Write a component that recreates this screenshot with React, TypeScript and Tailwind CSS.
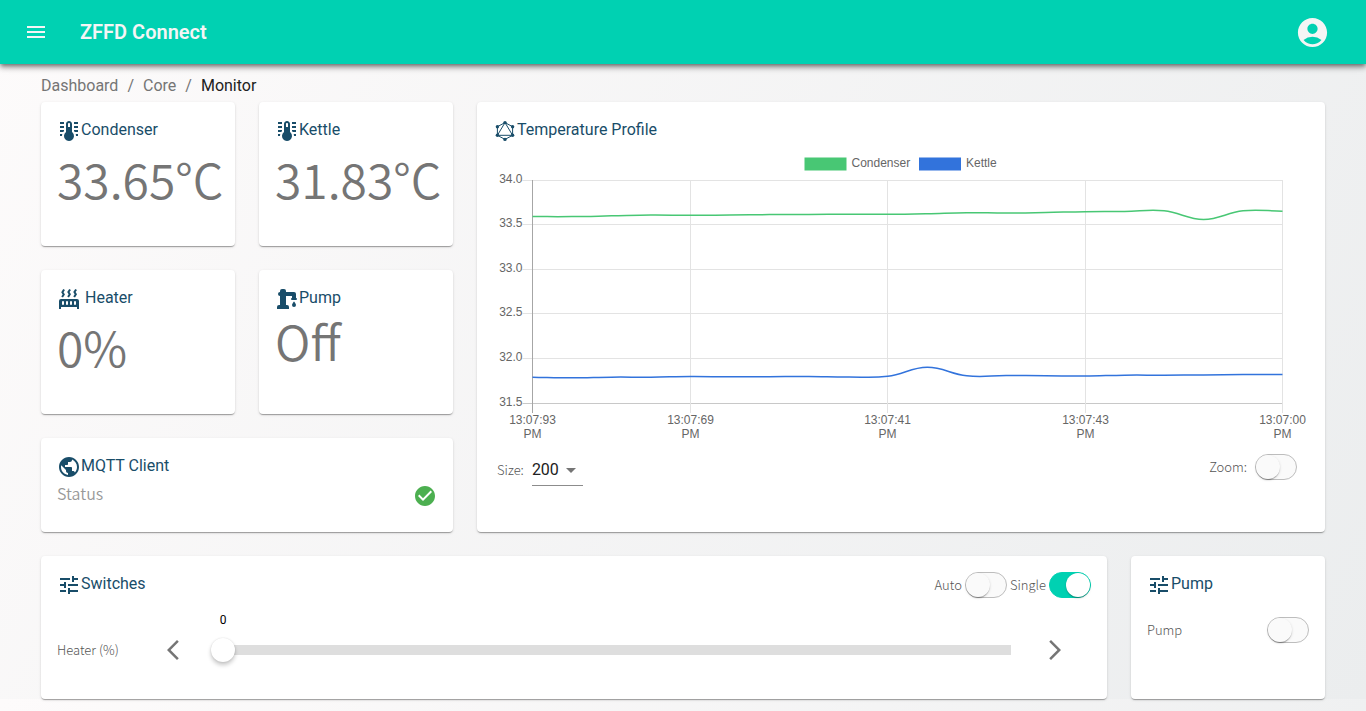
import React, { useState } from "react";
import {
  MdAccountCircle,
  MdArrowBackIosNew,
  MdArrowForwardIos,
  MdCheckCircle,
  MdMenu,
  MdPublic,
  MdTune,
} from "react-icons/md";

const THERMOMETER =
  "M17 3H21V5H17V3M17 7H21V9H17V7M17 11H21V13H17.75L17 12.1V11M21 15V17H19C19 16.31 18.9 15.63 18.71 15H21M7 3V5H3V3H7M7 7V9H3V7H7M7 11V12.1L6.25 13H3V11H7M3 15H5.29C5.1 15.63 5 16.31 5 17H3V15M15 13V5C15 3.34 13.66 2 12 2S9 3.34 9 5V13C6.79 14.66 6.34 17.79 8 20S12.79 22.66 15 21 17.66 16.21 16 14C15.72 13.62 15.38 13.28 15 13M12 4C12.55 4 13 4.45 13 5V8H11V5C11 4.45 11.45 4 12 4Z";
const RADIATOR =
  "M7.95,3L6.53,5.19L7.95,7.4H7.94L5.95,10.5L4.22,9.6L5.64,7.39L4.22,5.19L6.22,2.09L7.95,3M13.95,2.89L12.53,5.1L13.95,7.3L13.94,7.31L11.95,10.4L10.22,9.5L11.64,7.3L10.22,5.1L12.22,2L13.95,2.89M20,2.89L18.56,5.1L20,7.3V7.31L18,10.4L16.25,9.5L17.67,7.3L16.25,5.1L18.25,2L20,2.89M2,22V14A2,2 0 0,1 4,12H20A2,2 0 0,1 22,14V22H20V20H4V22H2M6,14A1,1 0 0,0 5,15V17A1,1 0 0,0 6,18A1,1 0 0,0 7,17V15A1,1 0 0,0 6,14M10,14A1,1 0 0,0 9,15V17A1,1 0 0,0 10,18A1,1 0 0,0 11,17V15A1,1 0 0,0 10,14M14,14A1,1 0 0,0 13,15V17A1,1 0 0,0 14,18A1,1 0 0,0 15,17V15A1,1 0 0,0 14,14M18,14A1,1 0 0,0 17,15V17A1,1 0 0,0 18,18A1,1 0 0,0 19,17V15A1,1 0 0,0 18,14Z";
const WATER_PUMP =
  "M19,14.5C19,14.5 21,16.67 21,18A2,2 0 0,1 19,20A2,2 0 0,1 17,18C17,16.67 19,14.5 19,14.5M5,18V9A2,2 0 0,1 3,7A2,2 0 0,1 5,5V4A2,2 0 0,1 7,2H9A2,2 0 0,1 11,4V5H19A2,2 0 0,1 21,7V9L21,11A1,1 0 0,1 22,12A1,1 0 0,1 21,13H17A1,1 0 0,1 16,12A1,1 0 0,1 17,11V9H11V18H12A2,2 0 0,1 14,20V22H2V20A2,2 0 0,1 4,18H5Z";

function PathIcon({ d }: { d: string }) {
  return (
    <svg viewBox="0 0 24 24" className="size-6 shrink-0 fill-current" aria-hidden="true">
      <path d={d} />
    </svg>
  );
}

function GraphIcon() {
  const nodes = [
    [12, 3.6],
    [19.6, 7.7],
    [19.6, 16.3],
    [12, 20.4],
    [4.4, 16.3],
    [4.4, 7.7],
  ];
  return (
    <svg viewBox="0 0 24 24" className="size-6 shrink-0" aria-hidden="true">
      <g fill="none" stroke="currentColor" strokeWidth="1">
        <path d="M12 3.6 19.6 7.7V16.3L12 20.4 4.4 16.3V7.7Z" />
        <path d="M12 3.6 19.6 16.3H4.4Z" />
      </g>
      {nodes.map(([x, y]) => (
        <circle key={`${x}-${y}`} cx={x} cy={y} r="1.7" fill="currentColor" />
      ))}
    </svg>
  );
}

function Card({ className = "", children }: { className?: string; children: React.ReactNode }) {
  return (
    <section
      className={`rounded bg-white px-4 pt-4 shadow-[0px_2px_1px_-1px_rgba(0,0,0,0.2),0px_1px_1px_0px_rgba(0,0,0,0.14),0px_1px_3px_0px_rgba(0,0,0,0.12)] ${className}`}
    >
      {children}
    </section>
  );
}

function CardTitle({ icon, children, gap = "" }: { icon: React.ReactNode; children: React.ReactNode; gap?: string }) {
  return (
    <h2 className={`flex h-6 items-start text-base leading-6 text-[#194d69] ${gap}`}>
      <span className="pt-px">{icon}</span>
      <span>{children}</span>
    </h2>
  );
}

function Reading({ children, className = "mt-2" }: { children: React.ReactNode; className?: string }) {
  return (
    <p
      className={`font-['Noto_Sans_CJK_SC',sans-serif] text-5xl leading-14 font-[350] whitespace-nowrap text-[#757575] ${className}`}
    >
      {children}
    </p>
  );
}

const LABEL = "font-['Noto_Sans_CJK_SC',sans-serif] text-[13px] leading-5 font-light text-[#555]";

function Toggle({ id, initial = false }: { id: string; initial?: boolean }) {
  const [on, setOn] = useState(initial);
  return (
    <span className="relative inline-flex h-[26px] w-[42px] shrink-0">
      <input
        id={id}
        type="checkbox"
        role="switch"
        checked={on}
        onChange={() => setOn(!on)}
        className="peer h-full w-full cursor-pointer appearance-none rounded-full border border-[#bdbdbd] bg-[#fafafa] checked:border-[#00d1b2] checked:bg-[#00d1b2]"
      />
      <span className="pointer-events-none absolute top-px left-px size-6 rounded-full bg-[#fafafa] shadow-[0px_2px_1px_-1px_rgba(0,0,0,0.2),0px_1px_1px_0px_rgba(0,0,0,0.14),0px_1px_3px_0px_rgba(0,0,0,0.12)] peer-checked:left-[17px] peer-checked:bg-white" />
    </span>
  );
}

const PLOT = { left: 39.5, right: 789.5, top: 30, bottom: 253 };
const MIN = 31.5;
const MAX = 34;

const CONDENSER = [
  33.59, 33.59, 33.598, 33.607, 33.604, 33.608, 33.612, 33.613, 33.616, 33.615, 33.622, 33.634, 33.63, 33.636, 33.645,
  33.647, 33.655, 33.558, 33.655, 33.65,
];
const KETTLE = [
  31.79, 31.782, 31.79, 31.79, 31.797, 31.794, 31.795, 31.797, 31.792, 31.8, 31.9, 31.805, 31.807, 31.806, 31.802, 31.812,
  31.812, 31.815, 31.82, 31.82,
];
const Y_TICKS = ["34.0", "33.5", "33.0", "32.5", "32.0", "31.5"];
const X_TICKS = [
  { index: 0, label: "13:07:93" },
  { index: 4, label: "13:07:69" },
  { index: 9, label: "13:07:41" },
  { index: 14, label: "13:07:43" },
  { index: 19, label: "13:07:00" },
];

const xAt = (i: number) => PLOT.left + ((PLOT.right - PLOT.left) * i) / 19;
const yAt = (v: number) => PLOT.top + ((MAX - v) / (MAX - MIN)) * (PLOT.bottom - PLOT.top);

function smoothPath(values: number[]) {
  const pts = values.map((v, i) => ({ x: xAt(i), y: yAt(v) }));
  const handles = pts.map((p, i) => {
    const prev = pts[i - 1] ?? p;
    const next = pts[i + 1] ?? p;
    const d1 = Math.hypot(p.x - prev.x, p.y - prev.y);
    const d2 = Math.hypot(next.x - p.x, next.y - p.y);
    const a = (0.4 * d1) / (d1 + d2);
    const b = (0.4 * d2) / (d1 + d2);
    return {
      inX: p.x - a * (next.x - prev.x),
      inY: p.y - a * (next.y - prev.y),
      outX: p.x + b * (next.x - prev.x),
      outY: p.y + b * (next.y - prev.y),
    };
  });
  return pts
    .map((p, i) => {
      if (i === 0) return `M${p.x} ${p.y}`;
      const from = handles[i - 1];
      const to = handles[i];
      return `C${from.outX} ${from.outY} ${to.inX} ${to.inY} ${p.x} ${p.y}`;
    })
    .join("");
}

function TemperatureChart() {
  return (
    <svg
      viewBox="0 0 816 292"
      className="mt-2 block h-auto w-full font-['Liberation_Sans',sans-serif] text-xs"
      role="img"
      aria-label="Condenser and kettle temperature over time"
    >
      <rect x="311.5" y="7.5" width="42" height="13" fill="#48c774" />
      <text x="358.5" y="17" fill="#666">
        Condenser
      </text>
      <rect x="426" y="7.5" width="42" height="13" fill="#3273dc" />
      <text x="473" y="17" fill="#666">
        Kettle
      </text>
      {Y_TICKS.map((t) => {
        const y = Math.floor(yAt(Number(t))) + 0.5;
        return (
          <g key={t}>
            <path d={`M29.5 ${y}H789.5`} stroke={t === "31.5" ? "#c8c8c8" : "#e3e3e3"} />
            <text x="29.5" y={y + 2.5} textAnchor="end" fill="#666">
              {t}
            </text>
          </g>
        );
      })}
      {X_TICKS.map(({ index, label }) => {
        const x = Math.floor(xAt(index)) + 0.5;
        return (
          <g key={label} textAnchor="middle" fill="#666">
            <path d={`M${x} 30V263`} stroke={index === 0 ? "#a6a6a6" : "#e3e3e3"} />
            <text x={x} y="274">
              {label}
            </text>
            <text x={x} y="288">
              PM
            </text>
          </g>
        );
      })}
      <path d={smoothPath(CONDENSER)} fill="none" stroke="#48c774" strokeWidth="1.5" />
      <path d={smoothPath(KETTLE)} fill="none" stroke="#3273dc" strokeWidth="1.5" />
    </svg>
  );
}

function SwitchesCard() {
  const [heat, setHeat] = useState(0);
  const step = (delta: number) => setHeat((v) => Math.min(100, Math.max(0, v + delta)));
  return (
    <Card className="col-span-5">
      <div className="flex items-start justify-between">
        <CardTitle icon={<MdTune className="size-6" />}>Switches</CardTitle>
        <div className="flex items-center gap-[3px]">
          <label htmlFor="auto" className={LABEL}>
            Auto
          </label>
          <Toggle id="auto" />
          <label htmlFor="single" className={LABEL}>
            Single
          </label>
          <Toggle id="single" initial />
        </div>
      </div>
      <div className="mt-2 flex items-center text-[#757575]">
        <label htmlFor="heater" className={`w-[104px] ${LABEL}`}>
          Heater (%)
        </label>
        <button type="button" aria-label="Decrease heater" onClick={() => step(-1)}>
          <MdArrowBackIosNew className="size-6" />
        </button>
        <div className="relative mr-8 ml-[26px] flex flex-1 py-8">
          <output htmlFor="heater" className="absolute top-1.5 left-0 w-6 text-center text-xs leading-4 text-black">
            {heat}
          </output>
          <input
            id="heater"
            type="range"
            min="0"
            max="100"
            value={heat}
            onChange={(e) => setHeat(Number(e.target.value))}
            className="h-6 w-full cursor-pointer appearance-none bg-transparent bg-[linear-gradient(#dedede,#dedede)] bg-[length:calc(100%-12px)_10px] bg-right bg-no-repeat [&::-webkit-slider-thumb]:size-6 [&::-webkit-slider-thumb]:appearance-none [&::-webkit-slider-thumb]:rounded-full [&::-webkit-slider-thumb]:bg-white [&::-webkit-slider-thumb]:shadow-[0_3px_4px_rgba(0,0,0,0.22),0_0_2px_rgba(0,0,0,0.12)]"
          />
        </div>
        <button type="button" aria-label="Increase heater" className="mr-6" onClick={() => step(1)}>
          <MdArrowForwardIos className="size-6" />
        </button>
      </div>
    </Card>
  );
}

export default function App() {
  return (
    <div className="min-h-screen bg-[linear-gradient(120deg,#fdfbfb_0%,#ebedee_100%)] bg-origin-content pb-3 font-[Roboto,sans-serif]">
      <header className="relative flex h-16 items-center bg-[#00d1b2] px-6 text-[#f5f5f5] shadow-[0px_2px_4px_-1px_rgba(0,0,0,0.4),0px_4px_5px_0px_rgba(0,0,0,0.24),0px_1px_10px_0px_rgba(0,0,0,0.16)]">
        <button type="button" aria-label="Open menu">
          <MdMenu className="size-6" />
        </button>
        <h1 className="ml-8 flex-1 text-xl leading-8 font-semibold">ZFFD Connect</h1>
        <button type="button" aria-label="Account" className="mr-3">
          <MdAccountCircle className="size-[35px]" />
        </button>
      </header>

      <main className="px-[41px]">
        <nav aria-label="Breadcrumb" className="flex gap-[9px] pt-[10px] pb-1 text-base leading-6 text-[#757575]">
          <a href="#dashboard">Dashboard</a>
          <span>/</span>
          <a href="#core">Core</a>
          <span>/</span>
          <a href="#monitor" aria-current="page" className="text-[#212121]">
            Monitor
          </a>
        </nav>

        <div className="grid grid-cols-6 grid-rows-[144px_144px_94px_143px] gap-6">
          <Card>
            <CardTitle icon={<PathIcon d={THERMOMETER} />}>Condenser</CardTitle>
            <Reading>33.65°C</Reading>
          </Card>
          <Card>
            <CardTitle icon={<PathIcon d={THERMOMETER} />}>Kettle</CardTitle>
            <Reading>31.83°C</Reading>
          </Card>

          <Card className="col-span-4 row-span-3">
            <CardTitle icon={<GraphIcon />}>Temperature Profile</CardTitle>
            <TemperatureChart />
            <div className="mt-3 flex items-start justify-between px-3 pl-1">
              <div className="flex items-center gap-2">
                <label htmlFor="size" className={LABEL}>
                  Size:
                </label>
                <div className="relative">
                  <select
                    id="size"
                    defaultValue="200"
                    className="h-8 w-[51px] appearance-none border-b border-[#8c8c8c] bg-transparent text-base leading-6 text-[#212121]"
                  >
                    <option>50</option>
                    <option>100</option>
                    <option>200</option>
                  </select>
                  <svg
                    viewBox="0 0 24 24"
                    className="pointer-events-none absolute top-1 right-0 size-6 fill-[#757575]"
                    aria-hidden="true"
                  >
                    <path d="m7 10 5 5 5-5z" />
                  </svg>
                </div>
              </div>
              <div className="flex items-center gap-2">
                <label htmlFor="zoom" className={LABEL}>
                  Zoom:
                </label>
                <Toggle id="zoom" />
              </div>
            </div>
          </Card>

          <Card>
            <CardTitle icon={<PathIcon d={RADIATOR} />} gap="gap-1">
              Heater
            </CardTitle>
            <Reading>0%</Reading>
          </Card>
          <Card>
            <CardTitle icon={<PathIcon d={WATER_PUMP} />}>Pump</CardTitle>
            <Reading className="mt-0.5">Off</Reading>
          </Card>

          <Card className="col-span-2">
            <CardTitle icon={<MdPublic className="size-6" />}>MQTT Client</CardTitle>
            <div className="flex items-start justify-between">
              <span className="pt-[3px] font-['Noto_Sans_CJK_SC',sans-serif] text-base leading-6 font-[350] text-[#999]">
                Status
              </span>
              <MdCheckCircle className="mt-1.5 size-6 text-[#4caf50]" role="img" aria-label="Connected" />
            </div>
          </Card>

          <SwitchesCard />

          <Card>
            <CardTitle icon={<MdTune className="size-6" />}>Pump</CardTitle>
            <div className="mt-[21px] flex items-center justify-between">
              <label htmlFor="pump" className={LABEL}>
                Pump
              </label>
              <Toggle id="pump" />
            </div>
          </Card>
        </div>
      </main>
    </div>
  );
}
